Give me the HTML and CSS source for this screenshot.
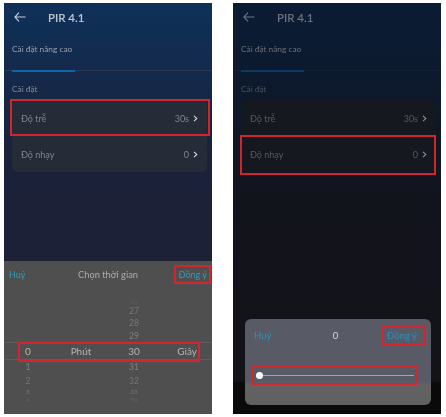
FILE: index.html
```html
<!DOCTYPE html>
<html lang="vi">
<head>
<meta charset="utf-8">
<title>PIR 4.1</title>
<link rel="stylesheet" href="styles.css">
</head>
<body>
<main class="shots">
  <section class="phone phone-time">
    <header class="topbar">
      <svg class="back" viewBox="0 0 12 10" width="12" height="10"><path d="M11.5 5H1M5 .7 .9 5 5 9.3" fill="none" stroke="currentColor" stroke-width="1.1"/></svg>
      <h1 class="title">PIR 4.1</h1>
    </header>
    <nav class="tabs"><span class="tab">Cài đặt nâng cao</span></nav>
    <h2 class="section">Cài đặt</h2>
    <div class="card">
      <div class="row mark mark-row"><span>Độ trễ</span><span class="value">30s <svg class="chev" viewBox="0 0 6 8" width="5" height="7"><path d="M1.2 .8 4.6 4 1.2 7.2" fill="none" stroke="currentColor" stroke-width="1.3"/></svg></span></div>
      <div class="row"><span>Độ nhạy</span><span class="value">0 <svg class="chev" viewBox="0 0 6 8" width="5" height="7"><path d="M1.2 .8 4.6 4 1.2 7.2" fill="none" stroke="currentColor" stroke-width="1.3"/></svg></span></div>
    </div>
    <div class="sheet">
      <div class="sheet-head">
        <span class="link">Huỷ</span>
        <span class="sheet-title">Chọn thời gian</span>
        <span class="link mark mark-ok">Đồng ý</span>
      </div>
      <div class="wheel">
        <div class="wrow h8 far"><i></i><i></i><span>26</span><i></i></div>
        <div class="wrow h10 mid"><i></i><i></i><span>27</span><i></i></div>
        <div class="wrow h14 mid"><i></i><i></i><span>28</span><i></i></div>
        <div class="wrow h12 near"><i></i><i></i><span>29</span><i></i></div>
        <div class="wrow selected mark mark-sel"><span>0</span><span class="unit">Phút</span><span>30</span><span class="unit-end">Giây</span></div>
        <div class="wrow h14 near"><span>1</span><i></i><span>31</span><i></i></div>
        <div class="wrow h14 mid"><span>2</span><i></i><span>32</span><i></i></div>
        <div class="wrow h8 mid"><span>3</span><i></i><span>33</span><i></i></div>
        <div class="wrow h8 far"><span>4</span><i></i><span>34</span><i></i></div>
      </div>
    </div>
  </section>

  <section class="phone phone-sens">
    <header class="topbar">
      <svg class="back" viewBox="0 0 12 10" width="12" height="10"><path d="M11.5 5H1M5 .7 .9 5 5 9.3" fill="none" stroke="currentColor" stroke-width="1.1"/></svg>
      <h1 class="title">PIR 4.1</h1>
    </header>
    <nav class="tabs"><span class="tab">Cài đặt nâng cao</span></nav>
    <h2 class="section">Cài đặt</h2>
    <div class="card">
      <div class="row"><span>Độ trễ</span><span class="value">30s <svg class="chev" viewBox="0 0 6 8" width="5" height="7"><path d="M1.2 .8 4.6 4 1.2 7.2" fill="none" stroke="currentColor" stroke-width="1.3"/></svg></span></div>
      <div class="row mark mark-row2"><span>Độ nhạy</span><span class="value">0 <svg class="chev" viewBox="0 0 6 8" width="5" height="7"><path d="M1.2 .8 4.6 4 1.2 7.2" fill="none" stroke="currentColor" stroke-width="1.3"/></svg></span></div>
    </div>
    <div class="dialog">
      <div class="dialog-head">
        <span class="link">Huỷ</span>
        <span class="dialog-value">0</span>
        <span class="link mark mark-ok2">Đồng ý</span>
      </div>
      <div class="slider mark mark-slider"><span class="thumb"></span></div>
    </div>
  </section>
</main>
</body>
</html>
```

FILE: styles.css
```css
* { box-sizing: border-box; }
html, body { margin: 0; background: #fff; }
body { font-family: "Lato", "Noto Sans", sans-serif; overflow: hidden; }
.shots { display: flex; gap: 21px; padding: 3px 4px; width: 446px; height: 417px; }
.phone {
  position: relative;
  display: flex;
  flex-direction: column;
  width: 208px;
  height: 411px;
  overflow: hidden;
  filter: blur(0.6px);
}
.phone-time {
  color: #aab0b8;
  background: linear-gradient(180deg, #0e3159 0%, #15294a 18%, #1b2138 38%, #1c2033 100%);
}
.phone-sens {
  width: 208px;
  color: #6d7077;
  background: linear-gradient(180deg, #0a1c34 0%, #0c1a2e 18%, #12141c 48%, #131318 92%, #0a0a0b 92.5%, #0a0a0b 100%);
}
.topbar { display: flex; align-items: center; height: 28px; padding: 0 0 0 10px; }
.back { color: #c9ced4; }
.phone-sens .back { color: #6d7581; }
.title { margin: 0 0 0 22px; font-size: 11.5px; font-weight: 400; color: #c4cad2; -webkit-text-stroke: 0.2px currentColor; }
.phone-sens .title { color: #6e7480; }
.tabs { height: 40px; padding: 0 0 0 8px; border-bottom: 1px solid #2c3a52; }
.phone-sens .tabs { border-bottom-color: #15202f; }
.tab {
  display: block;
  width: 63px;
  height: 41px;
  padding-top: 13px;
  font-size: 8.3px;
  white-space: nowrap;
  border-bottom: 2px solid #0f65a8;
  color: #9aa1ab;
}
.phone-sens .tab { border-bottom-color: #0d3a62; color: #6d7077; }
.section { margin: 13px 0 0 8px; height: 16px; font-size: 8.3px; font-weight: 400; color: #858b96; }
.phone-sens .section { color: #4d5058; }
.card { margin: 0 5px 0 8px; background: #252c37; border-radius: 5px; }
.phone-sens .card { background: #15181f; }
.row {
  position: relative;
  display: flex;
  justify-content: space-between;
  align-items: center;
  height: 36px;
  padding: 0 9px;
  font-size: 9px;
  color: #7f858e;
}
.phone-sens .row { color: #55585f; }
.value { display: flex; align-items: center; gap: 4px; }
.chev { color: #d5d8dc; }
.phone-sens .chev { color: #8b8e94; }

.mark::after {
  content: "";
  position: absolute;
  border: 2px solid #d1262d;
  pointer-events: none;
}
.mark-row::after { left: -2px; right: -3px; top: -1px; bottom: 0; }
.mark-row2::after { left: -1px; right: 0; top: -1px; bottom: -3px; }
.mark-ok { position: relative; }
.mark-ok::after { left: -5px; right: -4px; top: -4px; bottom: -4px; }
.mark-ok2 { position: relative; }
.mark-ok2::after { left: -6px; right: -9px; top: -4px; bottom: -5px; }
.mark-sel::after { left: 14px; right: 12px; top: -1px; bottom: -3px; }
.mark-slider::after { left: -4px; right: -3px; top: -9px; bottom: -9px; }

.sheet {
  margin-top: auto;
  height: 153px;
  background: #4f4f4f;
  color: #b5b5b5;
}
.sheet-head {
  display: grid;
  grid-template-columns: 1fr auto 1fr;
  align-items: center;
  height: 26px;
  padding: 0 5px;
  font-size: 9px;
}
.link { color: #2f9bc4; }
.sheet-head .link:last-child { justify-self: end; }
.sheet-title { color: #adadad; font-size: 9.3px; }
.wheel { margin-top: 11px; font-size: 8.5px; }
.wrow {
  position: relative;
  display: grid;
  grid-template-columns: 20px 86px 20px 1fr;
  align-items: center;
  height: 12px;
  padding: 0 15px 0 14px;
  line-height: 1;
  text-align: center;
}
.h8 { height: 8px; font-size: 6.5px; }
.h10 { height: 10px; }
.h12 { height: 12px; }
.h14 { height: 14px; }
.far { color: #5f5f5f; }
.mid { color: #767676; }
.near { color: #808080; }
.selected {
  height: 18px;
  font-size: 10px;
  color: #b4b4b4;
  border-top: 1px solid #5e5e5e;
  border-bottom: 1px solid #5e5e5e;
}
.unit-end { text-align: right; }

.dialog {
  position: absolute;
  left: 12px;
  right: 10px;
  bottom: 9px;
  height: 86px;
  border-radius: 6px;
  background: linear-gradient(180deg, #585b66 0%, #585b66 72%, #626262 76%, #606060 100%);
}
.dialog-head {
  display: grid;
  grid-template-columns: 1fr auto 1fr;
  align-items: center;
  height: 32px;
  padding: 0 14px 0 9px;
  font-size: 9.5px;
}
.dialog-head .link:last-child { justify-self: end; }
.dialog-head .link { color: #2f8fb8; }
.dialog-value { color: #d8d8d8; }
.slider {
  position: relative;
  margin: 24px 17px 0 11px;
  height: 1px;
  background: #a4a6ad;
}
.thumb {
  position: absolute;
  left: 0;
  top: -3px;
  width: 7px;
  height: 7px;
  border-radius: 50%;
  background: #fff;
}
```
